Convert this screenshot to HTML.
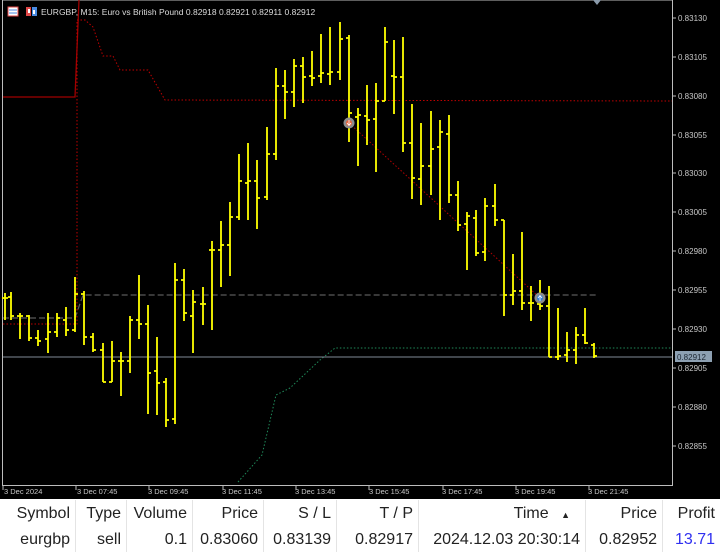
<!DOCTYPE html>
<html><head><meta charset="utf-8"><style>
html,body{margin:0;padding:0;background:#fff;width:720px;height:548px;overflow:hidden;font-family:"Liberation Sans",sans-serif}
#chart{position:absolute;left:0;top:0;width:720px;height:499px;background:#000}
svg text{font-family:"Liberation Sans",sans-serif}
table{position:absolute;left:0;top:500px;width:720px;border-collapse:collapse;font-size:16px;color:#222}
td{text-align:right;padding:0 5px 0 0;height:24px;border-right:1px solid #e4e4e4;white-space:nowrap}
td:last-child{border-right:none}
tr:first-child td{padding-top:2px}
tr:last-child td{padding-top:2px}
</style></head><body>
<div id="chart">
<svg width="720" height="499" viewBox="0 0 720 499">
<rect x="2.5" y="0" width="670" height="485.5" fill="none" stroke="#bdbdbd" stroke-width="1"/>
<line x1="672.5" y1="0" x2="672.5" y2="486" stroke="#bdbdbd"/>
<g fill="#c8c8c8" font-size="8">
<text x="678" y="21">0.83130</text><text x="678" y="60">0.83105</text><text x="678" y="99">0.83080</text>
<text x="678" y="138">0.83055</text><text x="678" y="176">0.83030</text><text x="678" y="215">0.83005</text>
<text x="678" y="254">0.82980</text><text x="678" y="293">0.82955</text><text x="678" y="332">0.82930</text>
<text x="678" y="371">0.82905</text><text x="678" y="410">0.82880</text><text x="678" y="449">0.82855</text>
</g>
<g stroke="#bdbdbd"><path d="M672 18h4M672 57h4M672 96h4M672 135h4M672 173h4M672 212h4M672 251h4M672 290h4M672 329h4M672 368h4M672 407h4M672 446h4"/></g>
<g fill="#c8c8c8" font-size="7.5">
<text x="4" y="494">3 Dec 2024</text><text x="77" y="494">3 Dec 07:45</text><text x="148" y="494">3 Dec 09:45</text>
<text x="222" y="494">3 Dec 11:45</text><text x="295" y="494">3 Dec 13:45</text><text x="369" y="494">3 Dec 15:45</text>
<text x="442" y="494">3 Dec 17:45</text><text x="515" y="494">3 Dec 19:45</text><text x="588" y="494">3 Dec 21:45</text>
</g>
<g stroke="#bdbdbd"><path d="M3 486v4M76 486v4M149 486v4M223 486v4M296 486v4M369 486v4M443 486v4M516 486v4M589 486v4"/></g>
<path d="M3 97H75L79 0" stroke="#a00000" stroke-width="1.3" fill="none"/>
<path d="M3 324H77V20H85L93 27L103 56H113L120 70H148L165 100L672 101" stroke="#c00000" stroke-width="1" stroke-dasharray="1.5 2" fill="none"/>
<path d="M3 318H75L83 295H597" stroke="#5a5a5a" stroke-width="1.2" stroke-dasharray="6 3" fill="none"/>
<path d="M238 482L262 455L276 395L290 388L320 360L335 348H672" stroke="#1f8a5a" stroke-width="1" stroke-dasharray="1.5 2" fill="none"/>
<path d="M349 123L540 298" stroke="#b00000" stroke-width="1" stroke-dasharray="1.5 2" fill="none"/>
<line x1="3" y1="357" x2="672" y2="357" stroke="#7f8a96" stroke-width="1"/>
<rect x="675" y="351" width="37" height="11" fill="#8da0b2"/>
<text x="677" y="360" font-size="8" fill="#1c2733">0.82912</text>
<path d="M593 0h8l-4 5z" fill="#8a9aaa"/>
<path stroke="#ffff00" stroke-width="1.8" fill="none" d="
M5 293V320M2 298H5M5 298H8
M11 292V320M8 297H11M11 316H14
M20 313V339M17 316H20M20 316H23
M29 315V341M26 316H29M29 338H32
M38 330V346M35 338H38M38 341H41
M48 313V353M45 339H48M48 332H51
M57 313V337M54 332H57M57 318H60
M66 307V336M63 320H66M66 330H69
M75 277V332M72 330H75M75 294H78
M84 291V345M81 294H84M84 337H87
M93 333V352M90 337H93M93 350H96
M103 343V382M100 350H103M103 382H106
M112 341V382M109 382H112M112 361H115
M121 352V396M118 361H121M121 361H124
M130 316V373M127 361H130M130 320H133
M139 275V339M136 320H139M139 324H142
M148 305V414M145 324H148M148 373H151
M157 337V415M154 371H157M157 383H160
M166 378V427M163 382H166M166 420H169
M175 263V424M172 419H175M175 280H178
M184 269V321M181 280H184M184 313H187
M193 290V353M190 316H193M193 302H196
M203 287V325M200 304H203M203 304H206
M212 241V330M209 250H212M212 250H215
M221 221V287M218 250H221M221 245H224
M230 202V276M227 245H230M230 217H233
M239 154V220M236 217H239M239 181H242
M248 143V220M245 183H248M248 181H251
M257 160V229M254 181H257M257 198H260
M267 127V200M264 197H267M267 154H270
M276 68V160M273 154H276M276 86H279
M285 70V119M282 86H285M285 92H288
M294 59V107M291 92H294M294 66H297
M303 57V103M300 66H303M303 77H306
M312 51V86M309 76H312M312 78H315
M321 34V83M318 76H321M321 73H324
M330 27V85M327 74H330M330 72H333
M340 22V80M337 72H340M340 39H343
M349 35V142M346 38H349M349 113H352
M358 108V166M355 117H358M358 115H361
M367 85V145M364 116H367M367 120H370
M376 83V172M373 119H376M376 101H379
M385 27V101M382 101H385M385 42H388
M394 40V114M391 76H394M394 77H397
M403 37V152M400 77H403M403 143H406
M412 104V199M409 143H412M412 178H415
M421 123V205M418 179H421M421 166H424
M431 111V195M428 166H431M431 149H434
M440 120V220M437 147H440M440 132H443
M449 115V203M446 134H449M449 195H452
M458 181V231M455 195H458M458 225H461
M467 212V270M464 224H467M467 216H470
M476 210V256M473 218H476M476 253H479
M485 198V261M482 252H485M485 206H488
M495 184V226M492 206H495M495 220H498
M504 220V316M501 220H504M504 295H507
M513 254V305M510 295H513M513 291H516
M522 232V310M519 291H522M522 303H525
M531 286V321M528 303H531M531 303H534
M540 280V310M537 304H540M540 306H543
M549 286V357M546 306H549M549 357H552
M558 308V360M555 357H558M558 356H561
M567 332V362M564 355H567M567 350H570
M576 327V364M573 350H576M576 335H579
M585 308V344M582 335H585M585 343H588
M594 343V358M591 345H594M594 356H597"/>
<circle cx="349" cy="123" r="5.5" fill="#8c8c8c"/><circle cx="349" cy="123" r="3" fill="#e8623a"/><path d="M349 120v5M347 123l2 2.5 2-2.5" stroke="#fff" stroke-width="0.8" fill="none"/>
<circle cx="540" cy="298" r="5.5" fill="#8c8c8c"/><circle cx="540" cy="298" r="3" fill="#2f7fd8"/><path d="M540 301v-5M538 298l2-2.5 2 2.5" stroke="#fff" stroke-width="0.8" fill="none"/>
<rect x="8" y="7" width="10" height="9" fill="#fff" stroke="#e04848"/><path d="M9 10h8M9 13h8" stroke="#4a8ae0"/>
<rect x="26" y="7" width="5" height="9" fill="#e04848"/><rect x="32" y="7" width="5" height="9" fill="#4a8ae0"/><rect x="28" y="9" width="2" height="4" fill="#fff"/><rect x="33" y="10" width="2" height="4" fill="#fff"/>
<text x="41" y="15" font-size="8.5" fill="#dcdcdc">EURGBP, M15:  Euro vs British Pound  0.82918 0.82921 0.82911 0.82912</text>
</svg>
</div>
<table>
<tr><td style="width:70px">Symbol</td><td style="width:45px">Type</td><td style="width:60px">Volume</td><td style="width:65px">Price</td><td style="width:67px">S / L</td><td style="width:76px">T / P</td><td style="width:161px">Time <span style="font-size:9px;margin:0 10px 0 8px">&#9650;</span></td><td style="width:71px">Price</td><td>Profit</td></tr>
<tr><td>eurgbp</td><td>sell</td><td>0.1</td><td>0.83060</td><td>0.83139</td><td>0.82917</td><td>2024.12.03 20:30:14</td><td>0.82952</td><td style="color:#3030f0">13.71</td></tr>
</table>
</body></html>
